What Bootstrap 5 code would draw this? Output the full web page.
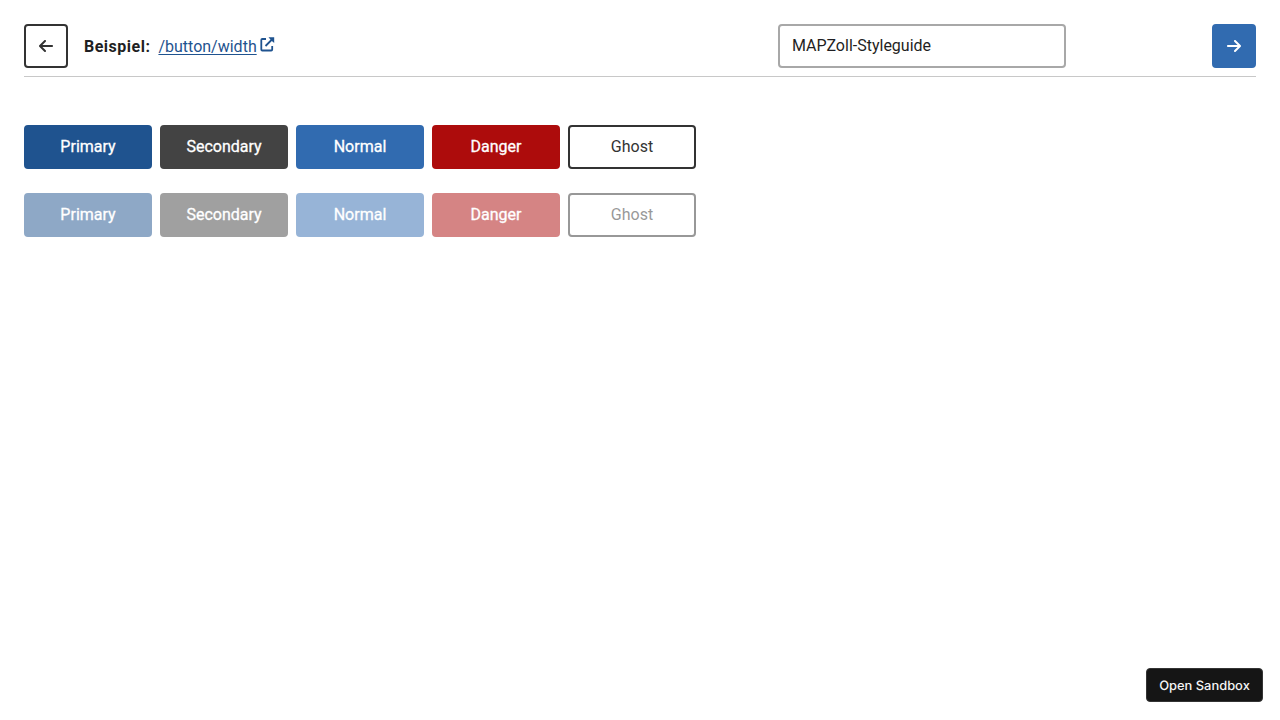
<!DOCTYPE html>
<html lang="de">
<head>
<meta charset="utf-8">
<meta name="viewport" content="width=device-width, initial-scale=1">
<title>MAPZoll-Styleguide</title>
<link href="https://cdn.jsdelivr.net/npm/bootstrap@5.3.0/dist/css/bootstrap.min.css" rel="stylesheet">
<style>
body{font-family:Roboto,sans-serif;font-size:16px;line-height:24px;color:#1f1f23}
.topbar{border-bottom:1px solid #c8c8c8}
.kbtn{--bs-btn-border-width:2px;--bs-btn-border-radius:4px;--bs-btn-font-weight:400;--bs-btn-padding-y:0;--bs-btn-padding-x:0;--bs-btn-disabled-opacity:.5;height:44px;width:128px;line-height:38px;-webkit-text-stroke:.3px currentColor}
.kbtn.square{width:44px}
.k-primary{--bs-btn-color:#fff;--bs-btn-bg:#1f538f;--bs-btn-border-color:#1f538f;--bs-btn-disabled-color:#fff;--bs-btn-disabled-bg:#1f538f;--bs-btn-disabled-border-color:#1f538f}
.k-secondary{--bs-btn-color:#fff;--bs-btn-bg:#434343;--bs-btn-border-color:#434343;--bs-btn-disabled-color:#fff;--bs-btn-disabled-bg:#434343;--bs-btn-disabled-border-color:#434343}
.k-normal{--bs-btn-color:#fff;--bs-btn-bg:#316bb0;--bs-btn-border-color:#316bb0;--bs-btn-disabled-color:#fff;--bs-btn-disabled-bg:#316bb0;--bs-btn-disabled-border-color:#316bb0}
.k-danger{--bs-btn-color:#fff;--bs-btn-bg:#ad0c0c;--bs-btn-border-color:#ad0c0c;--bs-btn-disabled-color:#fff;--bs-btn-disabled-bg:#ad0c0c;--bs-btn-disabled-border-color:#ad0c0c}
.k-ghost{--bs-btn-color:#333;--bs-btn-bg:#fff;--bs-btn-border-color:#333;--bs-btn-disabled-color:#333;--bs-btn-disabled-border-color:#333;-webkit-text-stroke:0}
.example-label{letter-spacing:.5px;padding-top:2px}
.path-link{color:#1f538f;text-decoration:underline;text-underline-offset:2px;padding-top:2px}
.link-mark{margin:0 0 4px 3.500px}
.theme{width:288px;height:44px;border:2px solid #a8a8a8;border-radius:4px;padding:0 12px;line-height:39px;margin-right:146px}
.sandbox{right:17px;bottom:18px;width:117px;height:34px;background:#151515;border:1px solid #343434;border-radius:4px;color:#f5f5f5;font:500 12.900px/32px "Inter",sans-serif;text-rendering:geometricPrecision;padding:2px 0 0}
</style>
</head>
<body class="p-4">
<header class="topbar d-flex align-items-center pb-2 mb-5">
<button class="btn kbtn square k-ghost d-flex align-items-center justify-content-center" aria-label="Zurück"><svg width="14" height="16" viewBox="0 0 448 512" fill="currentColor"><path d="M9.400 233.400c-12.500 12.500-12.500 32.800 0 45.300l160 160c12.500 12.500 32.800 12.500 45.300 0s12.500-32.800 0-45.300L109.200 288 416 288c17.700 0 32-14.300 32-32s-14.300-32-32-32l-306.700 0L214.600 118.600c12.500-12.500 12.500-32.800 0-45.300s-32.800-12.500-45.300 0l-160 160z"/></svg></button>
<strong class="example-label ms-3 me-2">Beispiel:</strong>
<a class="path-link" href="#">/button/width</a>
<svg class="link-mark" width="15" height="15" viewBox="0 0 15 15"><path d="M6 2H2.300Q1.300 2 1.300 3V12.500Q1.300 13.500 2.300 13.500H11.200Q12.200 13.500 12.200 12.500V9M12 2.500L5.500 9" fill="none" stroke="#1f538f" stroke-width="1.800"/><path d="M8.500 .3H14.200V6L12.200 4.300 10.200 2.300Z" fill="#1f538f"/></svg>
<div class="theme ms-auto">MAPZoll-Styleguide</div>
<button class="btn kbtn square k-normal d-flex align-items-center justify-content-center" aria-label="Weiter"><svg width="14" height="16" viewBox="0 0 448 512" fill="currentColor"><path transform="matrix(-1 0 0 1 448 0)" d="M9.400 233.400c-12.500 12.500-12.500 32.800 0 45.300l160 160c12.500 12.500 32.800 12.500 45.300 0s12.500-32.800 0-45.300L109.200 288 416 288c17.700 0 32-14.300 32-32s-14.300-32-32-32l-306.700 0L214.600 118.600c12.500-12.500 12.500-32.800 0-45.300s-32.800-12.500-45.300 0l-160 160z"/></svg></button>
</header>
<main>
<div class="d-flex gap-2 mb-4">
<button class="btn kbtn k-primary">Primary</button>
<button class="btn kbtn k-secondary">Secondary</button>
<button class="btn kbtn k-normal">Normal</button>
<button class="btn kbtn k-danger">Danger</button>
<button class="btn kbtn k-ghost">Ghost</button>
</div>
<div class="d-flex gap-2">
<button class="btn kbtn k-primary" disabled>Primary</button>
<button class="btn kbtn k-secondary" disabled>Secondary</button>
<button class="btn kbtn k-normal" disabled>Normal</button>
<button class="btn kbtn k-danger" disabled>Danger</button>
<button class="btn kbtn k-ghost" disabled>Ghost</button>
</div>
</main>
<button class="sandbox position-fixed">Open Sandbox</button>
<script src="https://cdn.jsdelivr.net/npm/bootstrap@5.3.0/dist/js/bootstrap.bundle.min.js"></script>
</body>
</html>
